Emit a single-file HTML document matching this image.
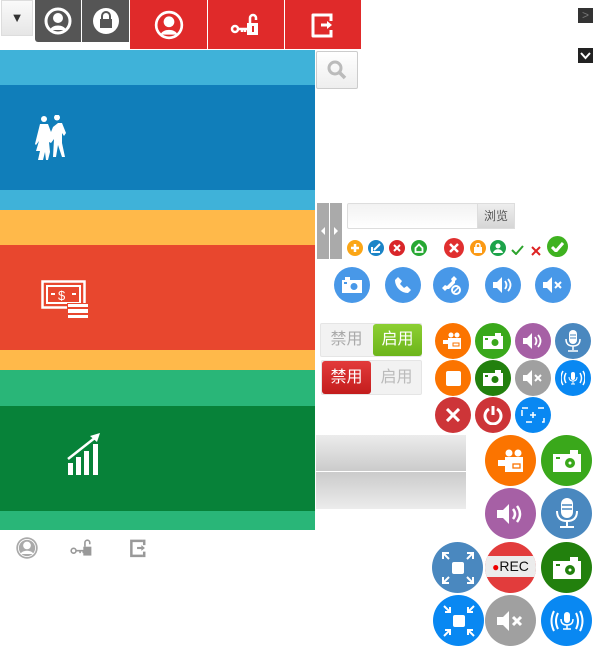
<!DOCTYPE html>
<html><head><meta charset="utf-8"><style>
*{margin:0;padding:0;box-sizing:border-box}
body{width:593px;height:657px;position:relative;background:#fff;overflow:hidden;font-family:"Liberation Sans","Noto Sans CJK SC",sans-serif}
div{position:absolute}
.c{border-radius:50%;display:flex;align-items:center;justify-content:center}
.f{display:flex;align-items:center;justify-content:center}
.c svg,.f svg{display:block}
</style></head><body>
<!-- top bar -->
<div style="left:1px;top:0;width:32px;height:36px;background:linear-gradient(#fafafa,#e6e6e6);border:1px solid #ddd;font-size:13px;color:#333;text-align:center;line-height:34px">▼</div>
<div class="f" style="left:35px;top:0;width:46px;height:42px;background:#555;border-radius:0 0 0 3px"><svg width="28" height="28" viewBox="0 0 28 28"><circle cx="14" cy="14" r="12" fill="none" stroke="#fff" stroke-width="3"/><circle cx="14" cy="11" r="5" fill="#fff"/><path d="M6 23c2-6 14-6 16 0" fill="#fff"/></svg></div>
<div class="f" style="left:82px;top:0;width:47px;height:42px;background:#555"><svg width="28" height="28" viewBox="0 0 28 28"><circle cx="14" cy="14" r="13" fill="#fff"/><rect x="8" y="12" width="12" height="9" fill="#555"/><path d="M10 12v-3a4 4 0 0 1 8 0v3" fill="none" stroke="#555" stroke-width="2"/></svg></div>
<div style="left:130px;top:0;width:231px;height:49px;background:#e02a2a"></div>
<div style="left:207px;top:0;width:1px;height:49px;background:#fff"></div>
<div style="left:284px;top:0;width:1px;height:49px;background:#fff"></div>
<div class="f" style="left:130px;top:0;width:77px;height:49px"><svg width="30" height="30" viewBox="0 0 28 28"><circle cx="14" cy="14" r="12" fill="none" stroke="#fff" stroke-width="2.5"/><circle cx="14" cy="11" r="5" fill="#fff"/><path d="M6 23c2-6 14-6 16 0" fill="#fff"/></svg></div>
<div class="f" style="left:208px;top:0;width:76px;height:49px"><svg width="32" height="26" viewBox="0 0 32 26"><circle cx="5" cy="17" r="3" fill="none" stroke="#fff" stroke-width="2.5"/><path d="M8 17h10M12 17v3M15 17v3" stroke="#fff" stroke-width="2.5" fill="none"/><rect x="17" y="11" width="11" height="12" fill="#fff"/><path d="M20 11V6a3 3 0 0 1 6 0v2" stroke="#fff" stroke-width="2.5" fill="none"/><rect x="22" y="14" width="2" height="6" fill="#e02a2a"/></svg></div>
<div class="f" style="left:285px;top:0;width:76px;height:49px"><svg width="26" height="28" viewBox="0 0 26 28"><path d="M18 4H3v21h15" fill="none" stroke="#fff" stroke-width="3" stroke-linejoin="round"/><path d="M18 4h3v6M21 19v6h-3" fill="none" stroke="#fff" stroke-width="3"/><path d="M11 14h7" stroke="#fff" stroke-width="3"/><path d="M17 10l5 4-5 4z" fill="#fff"/></svg></div>
<div style="left:578px;top:8px;width:15px;height:15px;background:#333;color:#777;font-size:12px;line-height:15px;text-align:center">&gt;</div>
<div class="f" style="left:578px;top:48px;width:15px;height:15px;background:#222"><svg width="11" height="8" viewBox="0 0 11 8"><path d="M1 1l4.5 5L10 1" stroke="#fff" stroke-width="2" fill="none"/></svg></div>
<!-- search -->
<div class="f" style="left:316px;top:51px;width:42px;height:38px;border:1px solid #ccc;border-radius:2px;background:linear-gradient(#fff,#eee)"><svg width="20" height="20" viewBox="0 0 20 20"><circle cx="8" cy="8" r="6" fill="none" stroke="#bbb" stroke-width="3"/><path d="M12 12l6 6" stroke="#bbb" stroke-width="3.5"/></svg></div>
<!-- bands -->
<div style="left:0;top:50px;width:315px;height:35px;background:#3fb2d9"></div>
<div style="left:0;top:85px;width:315px;height:105px;background:#107eba"></div>
<div style="left:0;top:190px;width:315px;height:20px;background:#3fb2d9"></div>
<div style="left:0;top:210px;width:315px;height:35px;background:#ffb94a"></div>
<div style="left:0;top:245px;width:315px;height:105px;background:#e8472e"></div>
<div style="left:0;top:350px;width:315px;height:20px;background:#ffb94a"></div>
<div style="left:0;top:370px;width:315px;height:36px;background:#29b678"></div>
<div style="left:0;top:406px;width:315px;height:105px;background:#078239"></div>
<div style="left:0;top:511px;width:315px;height:19px;background:#29b678"></div>
<!-- people -->
<div style="left:33px;top:115px"><svg width="38" height="50" viewBox="0 0 38 50"><circle cx="11" cy="4" r="3" fill="#fff"/><circle cx="24" cy="2.5" r="3" fill="#fff"/><path d="M7 9h8l3 8 2-5 5-4h4l4 10-2 3-2-3v10l3 14h-3l-4-12-2 12h-3l1-18-3 4-2-1 1 10-2 8h-2l-1-8-2 8H5l2-9H3l3-10-3 4-1-1z" fill="#fff"/></svg></div>
<!-- money -->
<div style="left:41px;top:280px"><svg width="47" height="39" viewBox="0 0 47 39"><rect x="1.5" y="1.5" width="42" height="26" fill="none" stroke="#fff" stroke-width="2.5"/><rect x="6" y="6" width="33" height="17" fill="none" stroke="#fff" stroke-width="2"/><path d="M10 14h4M31 14h4" stroke="#fff" stroke-width="2"/><text x="17" y="20" font-size="13" fill="#fff" font-family="Liberation Sans">$</text><rect x="26" y="23" width="21" height="15" fill="#e8472e"/><rect x="27" y="24" width="20" height="3" fill="#fff"/><rect x="27" y="29" width="20" height="4" fill="#fff"/><rect x="27" y="35" width="20" height="3" fill="#fff"/></svg></div>
<!-- chart -->
<div style="left:66px;top:433px"><svg width="36" height="42" viewBox="0 0 36 42"><path d="M2 26L30 4" stroke="#fff" stroke-width="2.5"/><path d="M24 3l10-3-3 9z" fill="#fff"/><rect x="2" y="30" width="5" height="12" fill="#fff"/><rect x="10" y="24" width="5" height="18" fill="#fff"/><rect x="18" y="18" width="5" height="24" fill="#fff"/><rect x="27" y="11" width="5" height="31" fill="#fff"/></svg></div>
<!-- bottom gray icons -->
<div style="left:15px;top:536px"><svg width="24" height="24" viewBox="0 0 28 28"><circle cx="14" cy="14" r="12.5" fill="#aaa"/><circle cx="14" cy="14" r="10.5" fill="#fff"/><circle cx="14" cy="14" r="9.5" fill="#aaa"/><circle cx="14" cy="11" r="4.5" fill="#fff"/><path d="M6.5 21c2-5 13-5 15 0" fill="#fff"/></svg></div>
<div style="left:69px;top:537px"><svg width="27" height="21" viewBox="0 0 32 26"><circle cx="5" cy="17" r="3" fill="none" stroke="#999" stroke-width="2"/><path d="M8 17h9v3M13 17v3" stroke="#999" stroke-width="2" fill="none"/><rect x="17" y="12" width="10" height="11" fill="#999"/><path d="M19 12V7a3 3 0 0 1 6 0v2" stroke="#999" stroke-width="2" fill="none"/></svg></div>
<div style="left:129px;top:538px"><svg width="19" height="20" viewBox="0 0 26 28"><path d="M18 4H3v21h15" fill="none" stroke="#999" stroke-width="3.5"/><path d="M18 4h3v6M21 19v6h-3" fill="none" stroke="#999" stroke-width="3.5"/><path d="M11 14h7" stroke="#999" stroke-width="3"/><path d="M17 10l5 4-5 4z" fill="#999"/></svg></div>
<!-- splitter + input -->
<div style="left:317px;top:203px;width:12px;height:56px;background:#aaa"><svg width="12" height="56"><path d="M8 24l-4 4 4 4z" fill="#fff"/></svg></div>
<div style="left:330px;top:203px;width:12px;height:56px;background:#aaa"><svg width="12" height="56"><path d="M4 24l4 4-4 4z" fill="#fff"/></svg></div>
<div style="left:347px;top:203px;width:168px;height:26px;border:1px solid #ddd;border-radius:2px;background:linear-gradient(#f2f2f2,#fff)"></div>
<div style="left:477px;top:203px;width:38px;height:26px;background:linear-gradient(#eee,#d6d6d6);border:1px solid #ddd;font-size:12px;color:#555;text-align:center;line-height:24px">浏览</div>
<!-- small icons -->
<div class="c" style="left:347px;top:240px;width:16px;height:16px;background:#fba616"><svg width="10" height="10"><path d="M5 1v8M1 5h8" stroke="#fff" stroke-width="2.5"/></svg></div>
<div class="c" style="left:368px;top:240px;width:16px;height:16px;background:#1b84c7"><svg width="10" height="10"><path d="M1 4v5h8" stroke="#fff" stroke-width="2" fill="none"/><path d="M3 7l6-6" stroke="#fff" stroke-width="2"/></svg></div>
<div class="c" style="left:389px;top:240px;width:16px;height:16px;background:#d9262a"><svg width="8" height="8"><path d="M1 1l6 6M7 1L1 7" stroke="#fff" stroke-width="2"/></svg></div>
<div class="c" style="left:411px;top:240px;width:16px;height:16px;background:#27a833"><svg width="10" height="10"><path d="M1.5 5L5 1.5 8.5 5v4h-7z" fill="none" stroke="#fff" stroke-width="1.8"/></svg></div>
<div class="c" style="left:444px;top:238px;width:20px;height:20px;background:#e02f2f"><svg width="10" height="10"><path d="M1 1l8 8M9 1L1 9" stroke="#fff" stroke-width="2.5"/></svg></div>
<div class="c" style="left:470px;top:240px;width:16px;height:16px;background:#fb9a15"><svg width="10" height="10"><rect x="1" y="4" width="8" height="6" fill="#fff"/><path d="M3 4V2.5a2 2 0 0 1 4 0V4" stroke="#fff" fill="none" stroke-width="1.5"/></svg></div>
<div class="c" style="left:490px;top:240px;width:16px;height:16px;background:#1da34a"><svg width="10" height="10"><circle cx="5" cy="3" r="2.5" fill="#fff"/><path d="M0 10c1-5 9-5 10 0z" fill="#fff"/></svg></div>
<div style="left:511px;top:242px"><svg width="13" height="10"><path d="M1 5l4 4 7-8" stroke="#2ca32c" stroke-width="2" fill="none"/></svg></div>
<div style="left:531px;top:243px"><svg width="10" height="10"><path d="M1 1l8 8M9 1L1 9" stroke="#d22" stroke-width="2"/></svg></div>
<div class="c" style="left:547px;top:236px;width:21px;height:21px;background:#3fb220"><svg width="13" height="10"><path d="M1 5l4 4 7-8" stroke="#fff" stroke-width="3" fill="none"/></svg></div>
<!-- blue call row -->
<div class="c" style="left:334px;top:267px;width:36px;height:36px;background:#4898e8"><svg width="20" height="16"><rect x="0" y="3" width="20" height="13" fill="#fff"/><rect x="3" y="0" width="5" height="3" fill="#fff"/><circle cx="12" cy="9.5" r="3.5" fill="#4898e8"/><rect x="2" y="5" width="3" height="2" fill="#4898e8"/></svg></div>
<div class="c" style="left:385px;top:267px;width:36px;height:36px;background:#4898e8"><svg width="18" height="18"><path d="M4 1l4 4-2 3 4 4 3-2 4 4-3 3C7 17 1 11 1 4z" fill="#fff"/></svg></div>
<div class="c" style="left:433px;top:267px;width:36px;height:36px;background:#4898e8"><svg width="20" height="20"><path d="M13 1l3 3-2 2 0 2-6 6-2 0-2 2-3-3 3-3 2 1 5-5-1-2z" fill="#fff"/><circle cx="15" cy="15" r="4" fill="none" stroke="#fff" stroke-width="2"/><path d="M12 18l6-6" stroke="#fff" stroke-width="1.5"/></svg></div>
<div class="c" style="left:485px;top:267px;width:36px;height:36px;background:#4898e8"><svg width="20" height="16"><path d="M0 5h4l5-5v16l-5-5H0z" fill="#fff"/><path d="M12 4q3 4 0 8M15 2q5 6 0 12" stroke="#fff" stroke-width="1.8" fill="none"/></svg></div>
<div class="c" style="left:535px;top:267px;width:36px;height:36px;background:#4898e8"><svg width="20" height="16"><path d="M0 5h4l5-5v16l-5-5H0z" fill="#fff"/><path d="M12 5l6 6M18 5l-6 6" stroke="#fff" stroke-width="2"/></svg></div>
<!-- toggles -->
<div style="left:320px;top:323px;width:102px;height:34px;background:#f2f2f2;border:1px solid #e5e5e5;border-radius:2px"></div>
<div style="left:320px;top:323px;width:53px;height:34px;font-size:16px;color:#aaa;text-align:center;line-height:34px">禁用</div>
<div style="left:373px;top:324px;width:49px;height:32px;background:linear-gradient(#8ccf33,#6db51b);border-radius:3px;font-size:16px;color:#fff;text-align:center;line-height:32px">启用</div>
<div style="left:321px;top:360px;width:101px;height:35px;background:#f2f2f2;border:1px solid #e5e5e5;border-radius:2px"></div>
<div style="left:322px;top:361px;width:49px;height:33px;background:linear-gradient(#e23a3a,#c31d1d);border-radius:3px;font-size:16px;color:#fff;text-align:center;line-height:33px">禁用</div>
<div style="left:371px;top:360px;width:51px;height:35px;font-size:16px;color:#bbb;text-align:center;line-height:35px">启用</div>
<!-- medium circles -->
<div class="c" style="left:435px;top:323px;width:36px;height:36px;background:#fb7400"><svg width="20" height="18"><circle cx="8" cy="3" r="2.5" fill="#fff"/><circle cx="14" cy="3" r="2.5" fill="#fff"/><rect x="5" y="6" width="13" height="11" fill="#fff"/><path d="M0 8h5v4H0z" fill="#fff"/><rect x="10" y="11" width="6" height="3" fill="none" stroke="#fb7400"/></svg></div>
<div class="c" style="left:475px;top:323px;width:36px;height:36px;background:#3aa81b"><svg width="20" height="16"><rect x="0" y="3" width="20" height="13" fill="#fff"/><rect x="12" y="0" width="6" height="3" fill="#fff"/><circle cx="12" cy="9.5" r="3.5" fill="#3aa81b"/><rect x="2" y="5" width="3" height="2" fill="#3aa81b"/></svg></div>
<div class="c" style="left:515px;top:323px;width:36px;height:36px;background:#a660a5"><svg width="20" height="16"><path d="M0 5h4l5-5v16l-5-5H0z" fill="#fff"/><path d="M12 4q3 4 0 8M15 2q5 6 0 12" stroke="#fff" stroke-width="1.8" fill="none"/></svg></div>
<div class="c" style="left:555px;top:323px;width:36px;height:36px;background:#4a88bf"><svg width="16" height="22"><rect x="4" y="0" width="8" height="14" rx="4" fill="#fff"/><path d="M5 5h6M5 8h6" stroke="#4a88bf"/><path d="M1 9q0 7 7 7t7-7M8 16v4M3 21h10" stroke="#fff" stroke-width="1.5" fill="none"/></svg></div>
<div class="c" style="left:435px;top:360px;width:36px;height:36px;background:#fb7400"><div style="position:static;width:15px;height:15px;background:#fff;border-radius:2px"></div></div>
<div class="c" style="left:475px;top:360px;width:36px;height:36px;background:#22800d"><svg width="20" height="16"><rect x="0" y="3" width="20" height="13" fill="#fff"/><rect x="12" y="0" width="6" height="3" fill="#fff"/><circle cx="12" cy="9.5" r="3.5" fill="#22800d"/><rect x="2" y="5" width="3" height="2" fill="#22800d"/></svg></div>
<div class="c" style="left:515px;top:360px;width:36px;height:36px;background:#a0a0a0"><svg width="20" height="16"><path d="M0 5h4l5-5v16l-5-5H0z" fill="#fff"/><path d="M12 5l6 6M18 5l-6 6" stroke="#fff" stroke-width="2"/></svg></div>
<div class="c" style="left:555px;top:360px;width:36px;height:36px;background:#0988f2"><svg width="24" height="16"><rect x="10" y="2" width="4" height="8" rx="2" fill="#fff"/><path d="M8 7q0 4 4 4t4-4M12 11v3M10 14h4" stroke="#fff" fill="none"/><path d="M5 3q-3 5 0 10M2 1q-4 7 0 14M19 3q3 5 0 10M22 1q4 7 0 14" stroke="#fff" stroke-width="1.5" fill="none"/></svg></div>
<div class="c" style="left:435px;top:397px;width:36px;height:36px;background:#cd3538"><svg width="14" height="14"><path d="M1 1l12 12M13 1L1 13" stroke="#fff" stroke-width="3"/></svg></div>
<div class="c" style="left:475px;top:397px;width:36px;height:36px;background:#cd3538"><svg width="20" height="20"><path d="M6 4a8 8 0 1 0 8 0" stroke="#fff" stroke-width="3" fill="none"/><path d="M10 1v9" stroke="#fff" stroke-width="3"/></svg></div>
<div class="c" style="left:515px;top:397px;width:36px;height:36px;background:#0988f2"><svg width="24" height="16"><rect x="1" y="1" width="22" height="14" fill="none" stroke="#fff" stroke-width="1.5" stroke-dasharray="6 10"/><path d="M12 5v6M9 8h6" stroke="#fff" stroke-width="1.5"/></svg></div>
<!-- gray bars -->
<div style="left:316px;top:435px;width:150px;height:36px;background:linear-gradient(#ececec,#cbcbcb)"></div>
<div style="left:316px;top:472px;width:150px;height:37px;background:linear-gradient(#cbcbcb,#ececec)"></div>
<!-- big circles -->
<div class="c" style="left:485px;top:435px;width:51px;height:51px;background:#fb7400"><svg width="28" height="24"><circle cx="12" cy="4" r="3.5" fill="#fff"/><circle cx="21" cy="4" r="3.5" fill="#fff"/><rect x="8" y="8" width="18" height="15" fill="#fff"/><path d="M1 11h7v6H1z" fill="#fff"/><rect x="16" y="15" width="7" height="4" fill="none" stroke="#fb7400" stroke-width="1.3"/></svg></div>
<div class="c" style="left:541px;top:435px;width:51px;height:51px;background:#3aa81b"><svg width="28" height="22"><rect x="0" y="4" width="28" height="18" fill="#fff"/><rect x="17" y="0" width="8" height="4" fill="#fff"/><circle cx="17" cy="13" r="5" fill="#3aa81b"/><circle cx="17" cy="13" r="1.5" fill="#fff"/><rect x="3" y="7" width="4" height="2" fill="#3aa81b"/></svg></div>
<div class="c" style="left:485px;top:488px;width:51px;height:51px;background:#a660a5"><svg width="28" height="22"><path d="M0 7h6l6-6v20l-6-6H0z" fill="#fff"/><path d="M16 6q4 5 0 10M20 3q6 8 0 16" stroke="#fff" stroke-width="2.5" fill="none"/></svg></div>
<div class="c" style="left:541px;top:488px;width:51px;height:51px;background:#4a88bf"><svg width="24" height="32"><rect x="6" y="0" width="12" height="20" rx="6" fill="#fff"/><path d="M7 7h10M7 11h10" stroke="#4a88bf" stroke-width="1.5"/><path d="M2 13q0 10 10 10t10-10M12 23v5M5 29h14" stroke="#fff" stroke-width="2" fill="none"/></svg></div>
<div class="c" style="left:432px;top:542px;width:51px;height:51px;background:#4a88bf"><svg width="34" height="34"><rect x="11" y="11" width="12" height="12" rx="2" fill="#fff"/><path d="M2 8V2h6M2 2l6 6M32 8V2h-6M32 2l-6 6M2 26v6h6M2 32l6-6M32 26v6h-6M32 32l-6-6" stroke="#fff" stroke-width="2" fill="none"/></svg></div>
<div style="left:485px;top:542px;width:51px;height:51px;border-radius:50%;background:#e23c3c;overflow:hidden"><div style="left:0;top:14px;width:51px;height:21px;background:#ececec;font-size:14px;line-height:21px;color:#111;text-align:center"><span style="color:#e00;font-size:12px">●</span>REC</div></div>
<div class="c" style="left:541px;top:542px;width:51px;height:51px;background:#22800d"><svg width="28" height="22"><rect x="0" y="4" width="28" height="18" fill="#fff"/><rect x="17" y="0" width="8" height="4" fill="#fff"/><circle cx="17" cy="13" r="5" fill="#22800d"/><circle cx="17" cy="13" r="1.5" fill="#fff"/><rect x="3" y="7" width="4" height="2" fill="#22800d"/></svg></div>
<div class="c" style="left:433px;top:595px;width:51px;height:51px;background:#0988f2"><svg width="34" height="34"><rect x="11" y="11" width="12" height="12" rx="2" fill="#fff"/><path d="M2 2l6 6M3 8h5V3M32 2l-6 6M31 8h-5V3M2 32l6-6M3 26h5v5M32 32l-6-6M31 26h-5v5" stroke="#fff" stroke-width="2" fill="none"/></svg></div>
<div class="c" style="left:485px;top:595px;width:51px;height:51px;background:#a0a0a0"><svg width="28" height="22"><path d="M0 7h6l6-6v20l-6-6H0z" fill="#fff"/><path d="M16 7l8 8M24 7l-8 8" stroke="#fff" stroke-width="3"/></svg></div>
<div class="c" style="left:541px;top:595px;width:51px;height:51px;background:#0988f2"><svg width="34" height="22"><rect x="14" y="2" width="6" height="11" rx="3" fill="#fff"/><path d="M11 9q0 6 6 6t6-6M17 15v4M13 19h8" stroke="#fff" stroke-width="1.5" fill="none"/><path d="M8 3q-4 8 0 16M4 1q-5 10 0 20M26 3q4 8 0 16M30 1q5 10 0 20" stroke="#fff" stroke-width="2" fill="none"/></svg></div>
</body></html>
